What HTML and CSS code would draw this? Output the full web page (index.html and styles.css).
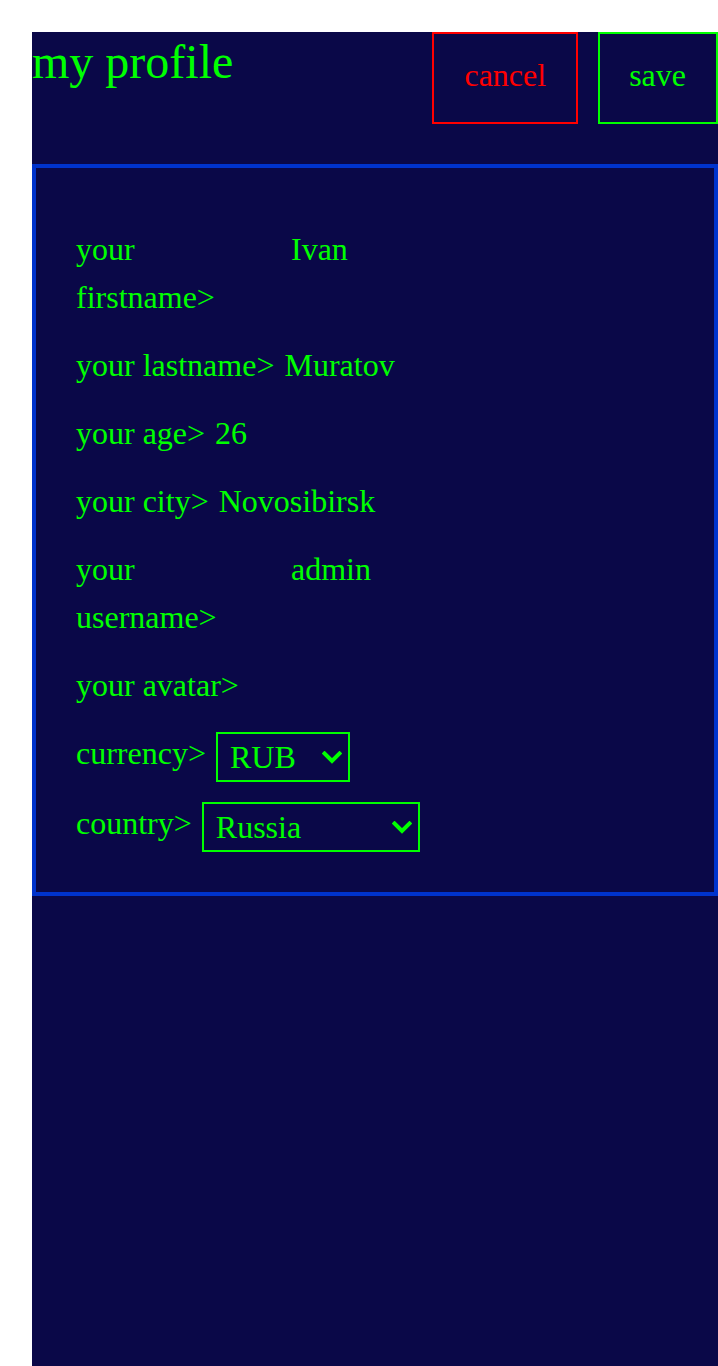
FILE: index.html
```html
<!DOCTYPE html>
<html lang="en">
<head>
<meta charset="utf-8">
<title>my profile</title>
<link rel="stylesheet" href="styles.css">
</head>
<body>
<div class="page">
  <header class="header">
    <h1 class="title">my profile</h1>
    <div class="actions">
      <button class="btn btn-cancel" type="button">cancel</button>
      <button class="btn btn-save" type="button">save</button>
    </div>
  </header>
  <section class="card">
    <div class="row"><span class="label">your firstname&gt;</span><span class="value">Ivan</span></div>
    <div class="row"><span class="label">your lastname&gt;</span><span class="value">Muratov</span></div>
    <div class="row"><span class="label">your age&gt;</span><span class="value">26</span></div>
    <div class="row"><span class="label">your city&gt;</span><span class="value">Novosibirsk</span></div>
    <div class="row"><span class="label">your username&gt;</span><span class="value">admin</span></div>
    <div class="row"><span class="label">your avatar&gt;</span></div>
    <div class="row"><span class="label">currency&gt;</span>
      <span class="select-wrap">
        <select class="select select-currency">
          <option>RUB</option>
          <option>USD</option>
          <option>EUR</option>
        </select>
        <svg class="chevron" width="20" height="13" viewBox="0 0 20 13" aria-hidden="true"><path d="M2.5 2.5 L10 10 L17.5 2.5" fill="none" stroke="#00ff00" stroke-width="4" stroke-linecap="square" stroke-linejoin="miter"/></svg>
      </span>
    </div>
    <div class="row"><span class="label">country&gt;</span>
      <span class="select-wrap">
        <select class="select select-country">
          <option>Russia</option>
          <option>Kazakhstan</option>
          <option>Belarus</option>
        </select>
        <svg class="chevron" width="20" height="13" viewBox="0 0 20 13" aria-hidden="true"><path d="M2.5 2.5 L10 10 L17.5 2.5" fill="none" stroke="#00ff00" stroke-width="4" stroke-linecap="square" stroke-linejoin="miter"/></svg>
      </span>
    </div>
  </section>
</div>
</body>
</html>
```

FILE: styles.css
```css
html, body {
  background: #ffffff;
}
body {
  margin: 32px 0 0 32px;
  font-family: "Liberation Serif", "Times New Roman", serif;
  color: #00ff00;
}
.page {
  background: #0a0848;
  min-height: 1334px;
}
.header {
  display: flex;
  justify-content: space-between;
  align-items: flex-start;
  margin-bottom: 40px;
}
.title {
  margin: 0;
  padding-top: 2px;
  font-size: 48px;
  font-weight: normal;
  line-height: normal;
  color: #00ff00;
}
.actions {
  display: flex;
  gap: 20px;
}
.btn {
  font-family: "Liberation Serif", "Times New Roman", serif;
  font-size: 32px;
  line-height: normal;
  background: #0a0848;
  padding: 23px 30px 28px;
  border: 2px solid;
  margin: 0;
  cursor: pointer;
}
.btn-cancel {
  color: #ff0000;
  border-color: #ff0000;
}
.btn-save {
  color: #00ff00;
  border-color: #00ff00;
  padding-left: 29px;
}
.card {
  border: 4px solid #0033cc;
  padding: 57px 40px 43px;
  display: flex;
  flex-direction: column;
  gap: 20px;
}
.row {
  display: flex;
  align-items: flex-start;
  gap: 10px;
  font-size: 32px;
  line-height: 48px;
}
.label {
  max-width: 205px;
}
.select-wrap {
  position: relative;
  display: flex;
  margin: 2.5px 0 -2.5px;
}
.select {
  appearance: none;
  -webkit-appearance: none;
  font-family: "Liberation Serif", "Times New Roman", serif;
  font-size: 32px;
  line-height: 46px;
  color: #00ff00;
  background: #0a0848;
  border: 2px solid #00ff00;
  border-radius: 0;
  height: 50px;
  padding: 0 0 0 12px;
  margin: 0;
  box-sizing: border-box;
}
.select-currency {
  width: 134px;
}
.select-country {
  width: 218px;
}
.chevron {
  position: absolute;
  right: 8px;
  top: 19px;
  pointer-events: none;
}
```
